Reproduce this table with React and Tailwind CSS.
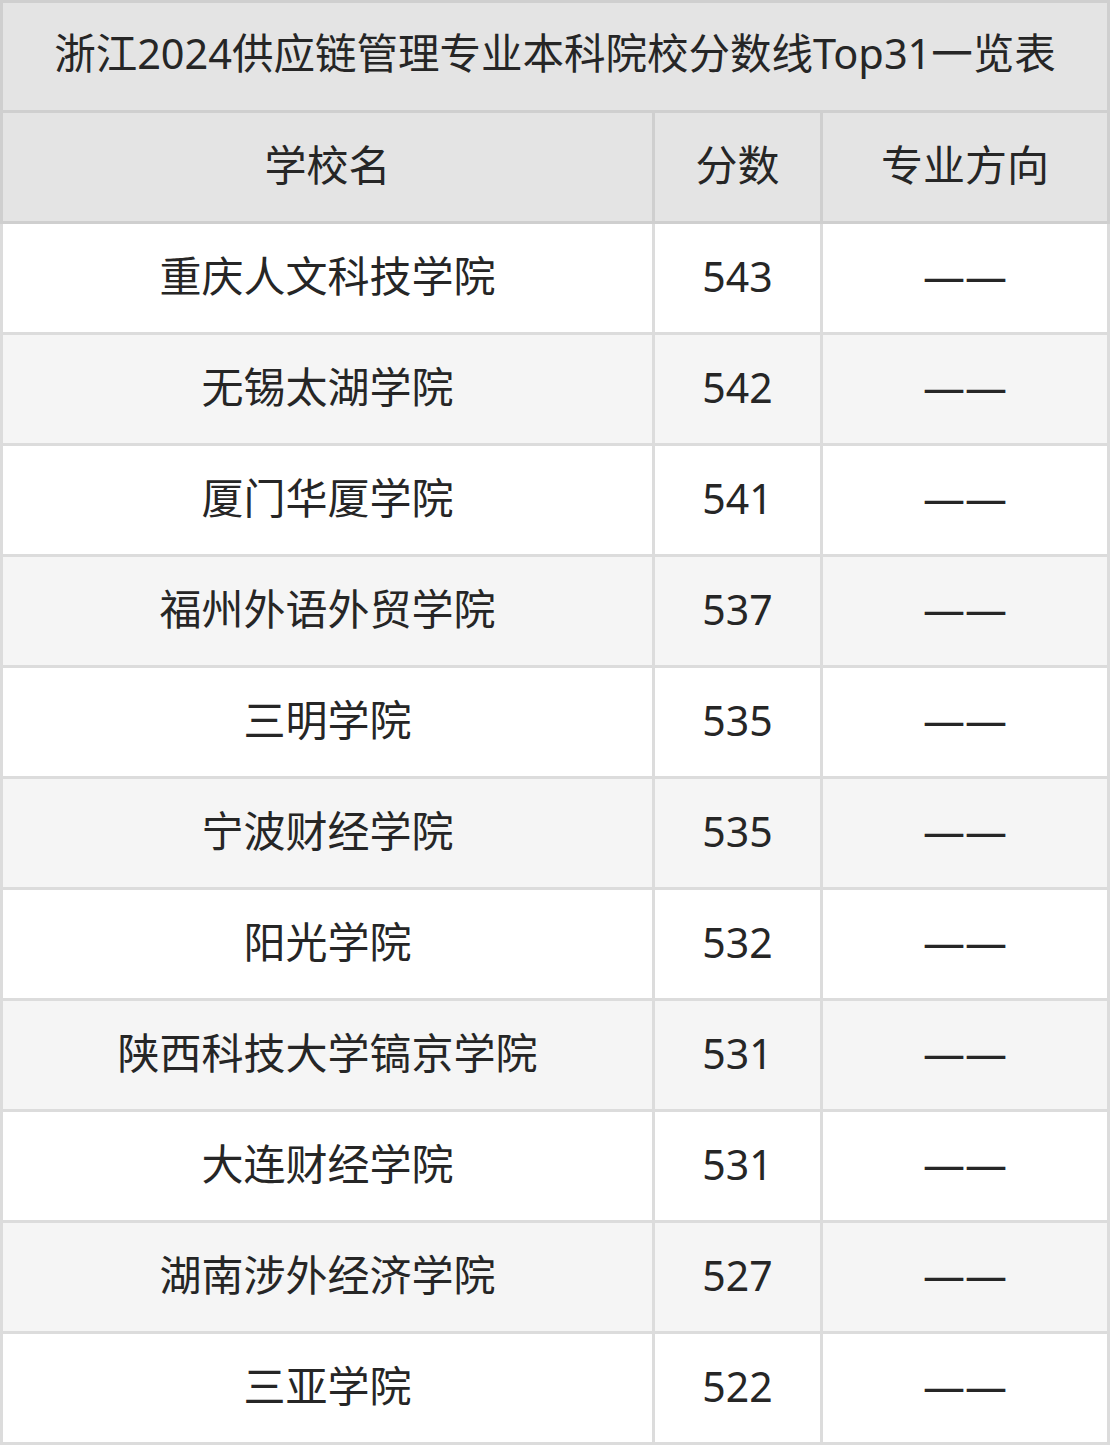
import React from "react";

const rows = [
  ["重庆人文科技学院", "543"],
  ["无锡太湖学院", "542"],
  ["厦门华厦学院", "541"],
  ["福州外语外贸学院", "537"],
  ["三明学院", "535"],
  ["宁波财经学院", "535"],
  ["阳光学院", "532"],
  ["陕西科技大学镐京学院", "531"],
  ["大连财经学院", "531"],
  ["湖南涉外经济学院", "527"],
  ["三亚学院", "522"],
];

const App = () => {
  return (
    <div
      className="w-[1110px] text-[#262626]"
      style={{ fontFamily: '"Noto Sans", "Noto Sans CJK SC", sans-serif' }}
    >
      <table className="w-full border-collapse table-fixed">
        <colgroup>
          <col className="w-[652px]" />
          <col className="w-[168px]" />
          <col />
        </colgroup>
        <thead>
          <tr>
            <th
              colSpan={3}
              className="h-[110px] pb-[6px] bg-[#e4e4e4] border-[3px] border-[#cfcfcf] text-[41.5px] leading-none font-normal text-center"
            >
              浙江2024供应链管理专业本科院校分数线Top31一览表
            </th>
          </tr>
          <tr className="bg-[#e4e4e4]">
            <th className="h-[111px] pb-[4px] border-[3px] border-[#cfcfcf] text-[42px] leading-none font-normal">
              学校名
            </th>
            <th className="pb-[4px] border-[3px] border-[#cfcfcf] text-[42px] leading-none font-normal">
              分数
            </th>
            <th className="pb-[4px] border-[3px] border-[#cfcfcf] text-[42px] leading-none font-normal">
              专业方向
            </th>
          </tr>
        </thead>
        <tbody>
          {rows.map(([name, score], i) => (
            <tr key={i} className={i % 2 === 1 ? "bg-[#f5f5f5]" : "bg-white"}>
              <td className="h-[111px] pb-[4px] border-[3px] border-[#dcdcdc] text-center text-[42px] leading-none">
                {name}
              </td>
              <td className="pb-[4px] border-[3px] border-[#dcdcdc] text-center text-[41px] leading-none">
                {score}
              </td>
              <td className="pb-[4px] border-[3px] border-[#dcdcdc] text-center text-[42px] leading-none">
                ——
              </td>
            </tr>
          ))}
        </tbody>
      </table>
    </div>
  );
};

export default App;
